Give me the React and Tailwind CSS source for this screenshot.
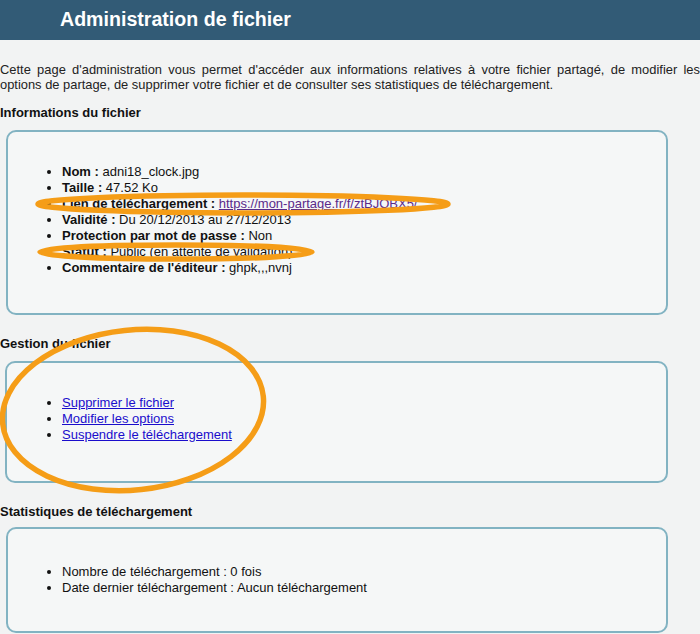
export default function App() {
  const infos = [
    { label: "Nom", value: "adni18_clock.jpg" },
    { label: "Taille", value: "47.52 Ko" },
    { label: "Lien de téléchargement", value: "https://mon-partage.fr/f/ztBJQBX5/", link: true },
    { label: "Validité", value: "Du 20/12/2013 au 27/12/2013" },
    { label: "Protection par mot de passe", value: "Non" },
    { label: "Statut", value: "Public (en attente de validation)" },
    { label: "Commentaire de l'éditeur", value: "ghpk,,,nvnj" },
  ];

  const actions = ["Supprimer le fichier", "Modifier les options", "Suspendre le téléchargement"];

  return (
    <div className="relative min-h-[634px] w-[700px] overflow-hidden bg-[#f2f3f3] text-[#111] font-['Liberation_Sans',Arial,sans-serif]">
      {/* bandeau */}
      <div className="h-[40px] bg-[#325b76] flex items-center pl-[60px]">
        <h1 className="text-white font-bold text-[19.6px] leading-none">Administration de fichier</h1>
      </div>

      <p className="mt-[22px] text-[12.9px] leading-[15px] text-[#222]">
        <span className="block text-justify [text-align-last:justify]">
          Cette page d'administration vous permet d'accéder aux informations relatives à votre fichier partagé, de
          modifier les
        </span>
        <span className="block">
          options de partage, de supprimer votre fichier et de consulter ses statistiques de téléchargement.
        </span>
      </p>

      {/* Informations */}
      <h3 className="mt-[13px] text-[13px] leading-[16px] font-bold">Informations du fichier</h3>
      <div className="mt-[9px] ml-[6px] w-[662px] h-[185px] rounded-[10px] border-2 border-[#82b3c2] bg-[#f5f7f7] pt-[32px]">
        <ul className="list-disc pl-[54px] text-[13px] leading-[16px]">
          {infos.map((it) => (
            <li key={it.label}>
              <span className="font-bold">{it.label} : </span>
              {it.link ? (
                <a href="#" className="text-[#5a2a8a] underline">{it.value}</a>
              ) : (
                it.value
              )}
            </li>
          ))}
        </ul>
      </div>

      {/* Gestion */}
      <h3 className="mt-[21px] text-[13px] leading-[16px] font-bold">Gestion du fichier</h3>
      <div className="mt-[9px] ml-[5px] w-[663px] h-[122px] rounded-[10px] border-2 border-[#82b3c2] bg-[#f5f7f7] pt-[32px]">
        <ul className="list-disc pl-[55px] text-[13px] leading-[16px]">
          {actions.map((a) => (
            <li key={a}>
              <a href="#" className="text-[#1a0dcc] underline">{a}</a>
            </li>
          ))}
        </ul>
      </div>

      {/* Statistiques */}
      <h3 className="mt-[21px] text-[13px] leading-[16px] font-bold">Statistiques de téléchargement</h3>
      <div className="mt-[7px] ml-[6px] w-[662px] h-[106px] rounded-[10px] border-2 border-[#82b3c2] bg-[#f5f7f7] pt-[35px]">
        <ul className="list-disc pl-[54px] text-[13px] leading-[16px]">
          <li>Nombre de téléchargement : 0 fois</li>
          <li>Date dernier téléchargement : Aucun téléchargement</li>
        </ul>
      </div>

      {/* annotations orange */}
      <svg className="absolute inset-0 pointer-events-none" width="700" height="634" viewBox="0 0 700 634">
        <g fill="none" stroke="#f59d17" strokeWidth="5.5">
          <ellipse cx="243" cy="204" rx="205" ry="9" />
          <ellipse cx="176" cy="252" rx="136" ry="7" />
          <ellipse cx="133" cy="410" rx="131" ry="80" transform="rotate(-6 133 410)" />
        </g>
      </svg>
    </div>
  );
}
